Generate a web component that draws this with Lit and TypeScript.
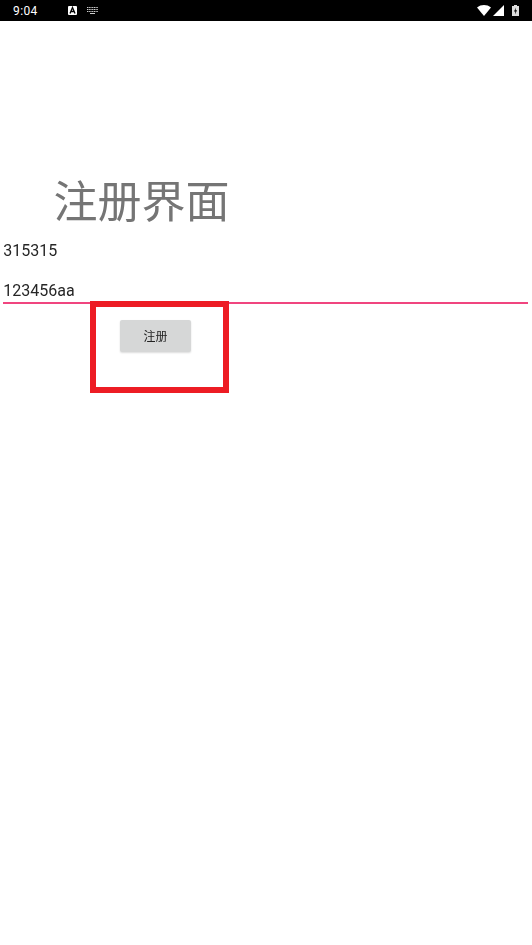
import { LitElement, html, css } from "lit";
import { customElement } from "lit/decorators.js";

@customElement("app-root")
export class AppRoot extends LitElement {
  static styles = css`
    :host {
      display: block;
      position: relative;
      width: 532px;
      height: 945px;
      background: #fff;
      overflow: hidden;
      font-family: Roboto, "Noto Sans CJK SC", sans-serif;
    }
    .status {
      height: 21px;
      background: #000;
      display: flex;
      align-items: center;
      color: #fff;
      font-size: 12px;
      font-weight: 400;
      padding: 0 13px 0 13px;
      box-sizing: border-box;
    }
    .time { width: 45px; letter-spacing: 0.4px; }
    .left { display: flex; align-items: center; gap: 10px; }
    .spacer { flex: 1; }
    .right { display: flex; align-items: center; gap: 2px; }
    svg { display: block; }
    .content { padding: 0 4px 0 3px; will-change: transform; }
    .title {
      margin: 152px 0 0 50.5px;
      font-size: 44px;
      line-height: 52px;
      height: 52px;
      color: #757575;
      font-family: "Noto Sans CJK SC", sans-serif;
      font-weight: 400;
    }
    .field {
      font-size: 16px;
      line-height: 20px;
      color: #262626;
      padding-left: 0.3px;
    }
    .user { margin-top: 16px; }
    .pass { margin-top: 20px; padding-bottom: 1px; border-bottom: 2px solid #f0457f; }
    .btn-row { padding: 16px 0 0 117px; }
    .btn {
      width: 71px;
      height: 32px;
      padding-bottom: 2px;
      box-sizing: border-box;
      background: #d6d7d7;
      border-radius: 2px;
      box-shadow: 0 1px 2px rgba(0, 0, 0, 0.14);
      display: flex;
      align-items: center;
      justify-content: center;
      font-size: 12px;
      color: #222;
      font-family: "Noto Sans CJK SC", sans-serif;
    }
    .mark {
      position: absolute;
      left: 90px;
      top: 301px;
      width: 139px;
      height: 92px;
      box-sizing: border-box;
      border: 6px solid #ed1c24;
      pointer-events: none;
    }
  `;

  render() {
    return html`
      <div class="status">
        <div class="left">
          <span class="time">9:04</span>
          <svg width="9" height="9" viewBox="0 0 9 9">
            <rect width="9" height="9" rx="1" fill="#fff" />
            <path d="M2 7.5 L4.5 1.5 L7 7.5 M3 5.5 H6" stroke="#000" stroke-width="1.3" fill="none" />
          </svg>
          <svg width="11" height="7" viewBox="0 0 11 7">
            <path d="M0 .5H11M0 2.5H11M0 4.5H11" stroke="#ccc" stroke-width="1" stroke-dasharray="1.2 .5" fill="none" />
            <path d="M3 6.5H8" stroke="#ccc" stroke-width="1" fill="none" />
          </svg>
        </div>
        <div class="spacer"></div>
        <div class="right">
          <svg width="14" height="11" viewBox="0 0 14 11"><path d="M0 2.5 C4 -.8 10 -.8 14 2.5 L7 11 Z" fill="#fff" /></svg>
          <svg width="11" height="11" viewBox="0 0 11 11"><path d="M11 0 V11 H0 Z" fill="#fff" /></svg>
          <svg style="margin-left:6px" width="7" height="11" viewBox="0 0 7 11">
            <path d="M2 0H5V1H7V11H0V1H2Z" fill="#ddd" />
            <path d="M4 2.5 L2 6.5 H3.4 L3 9.5 L5 5.3 H3.6 Z" fill="#000" />
          </svg>
        </div>
      </div>
      <div class="content">
        <div class="title">注册界面</div>
        <div class="field user">315315</div>
        <div class="field pass">123456aa</div>
        <div class="btn-row"><div class="btn">注册</div></div>
      </div>
      <div class="mark"></div>
    `;
  }
}
